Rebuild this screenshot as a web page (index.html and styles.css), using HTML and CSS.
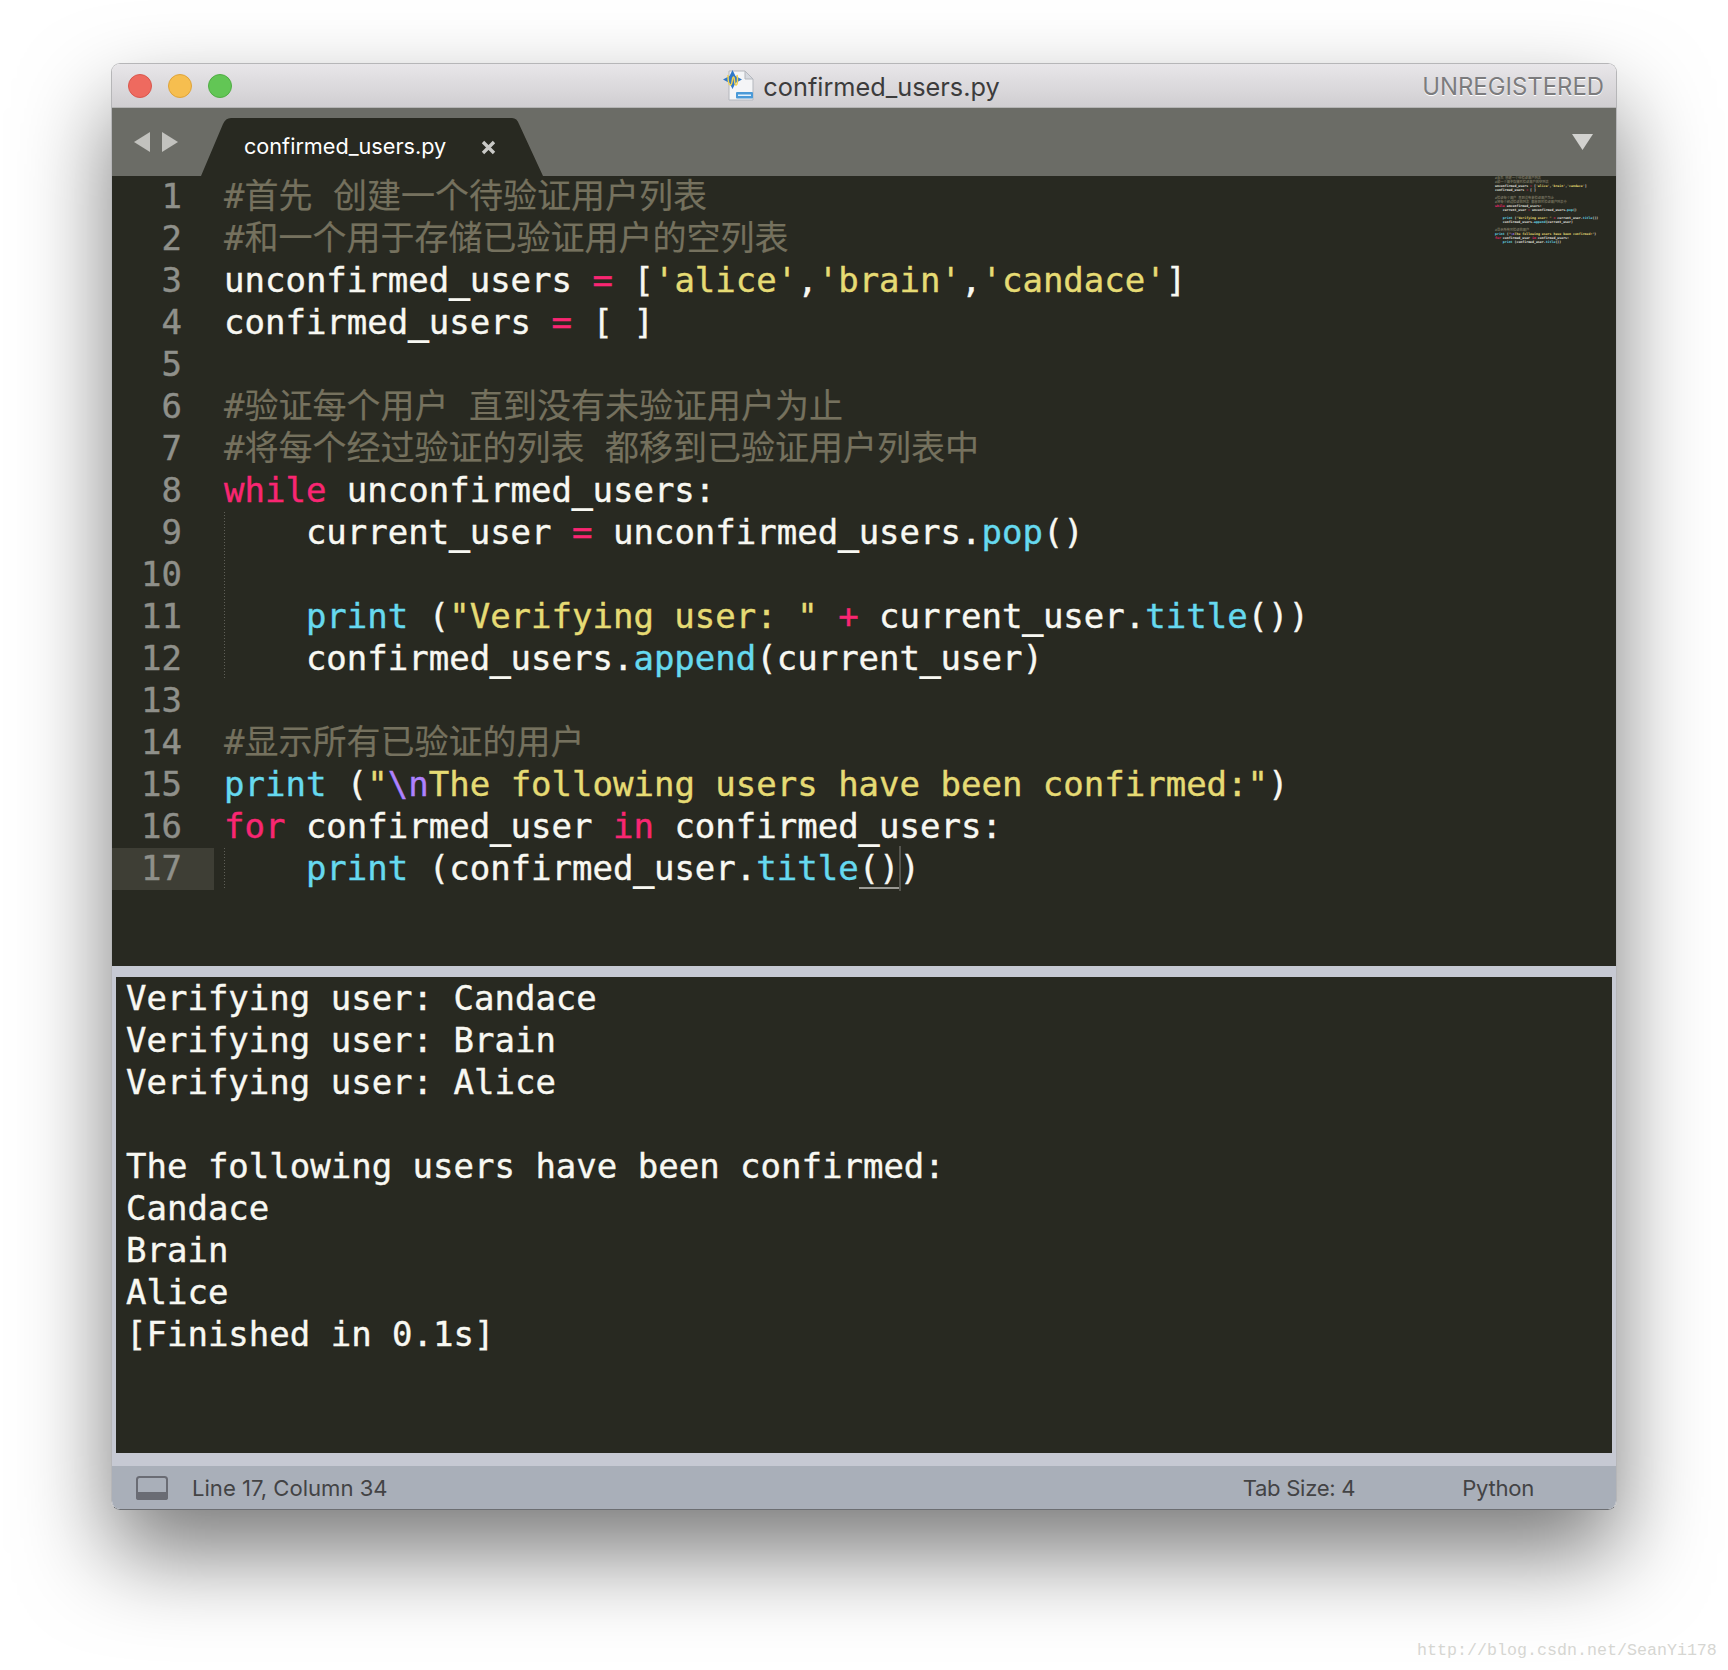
FILE: index.html
```html
<!DOCTYPE html>
<html lang="en">
<head>
<meta charset="utf-8">
<title>confirmed_users.py</title>
<link rel="stylesheet" href="styles.css">
</head>
<body>
<main class="window">
  <header class="titlebar">
    <div class="lights"><span class="light red"></span><span class="light yellow"></span><span class="light green"></span></div>
    <div class="title">
      <svg class="file-icon" width="31" height="31" viewBox="0 0 31 31">
        <path d="M6 1H22L30 9V30H6Z" fill="#f4f5f7" stroke="#b4b7bd"/>
        <path d="M22 1V9H30Z" fill="#d6d9df" stroke="#b4b7bd"/>
        <path d="M9.5 0L12.5 6L19 9.5L12.5 13L9.5 19L6.5 13L0 9.5L6.5 6Z" fill="#2f78c8"/>
        <path d="M5 5C5 12 6 15 7.5 15C9.5 15 9 7 10.5 7C12 7 11 15 13 15C14.5 15 15 9 14 5" fill="none" stroke="#f2d24e" stroke-width="1.5"/>
        <rect x="13" y="22" width="17" height="6.5" rx="1" fill="#4a9ad8"/>
        <rect x="15" y="24.5" width="13" height="1.5" fill="#e6f2fb"/>
      </svg>
      <span class="title-name">confirmed_users.py</span>
    </div>
    <div class="unreg">UNREGISTERED</div>
  </header>

  <nav class="tabbar">
    <div class="arrows">
      <svg width="16" height="20" viewBox="0 0 16 20"><path d="M16 0V20L0 10Z" fill="#c2c2be"/></svg>
      <svg width="16" height="20" viewBox="0 0 16 20"><path d="M0 0V20L16 10Z" fill="#c2c2be"/></svg>
    </div>
    <div class="tab">
      <span class="tab-name">confirmed_users.py</span>
      <svg class="tab-close" width="15" height="15" viewBox="0 0 15 15"><path d="M2 2L13 13M13 2L2 13" stroke="#c9c9c6" stroke-width="3.4"/></svg>
    </div>
    <svg class="tab-menu" width="21" height="16" viewBox="0 0 21 16"><path d="M0 0H21L10.5 16Z" fill="#d2d2cf"/></svg>
  </nav>

  <section class="editor">
    <div class="row"><span class="ln">1</span><span class="code c">#首先 创建一个待验证用户列表</span></div>
    <div class="row"><span class="ln">2</span><span class="code c">#和一个用于存储已验证用户的空列表</span></div>
    <div class="row"><span class="ln">3</span><span class="code">unconfirmed<i class="u">_</i>users <b class="k">=</b> [<b class="s">'alice'</b>,<b class="s">'brain'</b>,<b class="s">'candace'</b>]</span></div>
    <div class="row"><span class="ln">4</span><span class="code">confirmed<i class="u">_</i>users <b class="k">=</b> [ ]</span></div>
    <div class="row"><span class="ln">5</span><span class="code"></span></div>
    <div class="row"><span class="ln">6</span><span class="code c">#验证每个用户 直到没有未验证用户为止</span></div>
    <div class="row"><span class="ln">7</span><span class="code c">#将每个经过验证的列表 都移到已验证用户列表中</span></div>
    <div class="row"><span class="ln">8</span><span class="code"><b class="k">while</b> unconfirmed<i class="u">_</i>users:</span></div>
    <div class="row"><span class="ln">9</span><span class="code guide">    current<i class="u">_</i>user <b class="k">=</b> unconfirmed<i class="u">_</i>users.<b class="f">pop</b>()</span></div>
    <div class="row"><span class="ln">10</span><span class="code guide"></span></div>
    <div class="row"><span class="ln">11</span><span class="code guide">    <b class="f">print</b> (<b class="s">"Verifying user: "</b> <b class="k">+</b> current<i class="u">_</i>user.<b class="f">title</b>())</span></div>
    <div class="row"><span class="ln">12</span><span class="code guide">    confirmed<i class="u">_</i>users.<b class="f">append</b>(current<i class="u">_</i>user)</span></div>
    <div class="row"><span class="ln">13</span><span class="code"></span></div>
    <div class="row"><span class="ln">14</span><span class="code c">#显示所有已验证的用户</span></div>
    <div class="row"><span class="ln">15</span><span class="code"><b class="f">print</b> (<b class="s">"<b class="e">\n</b>The following users have been confirmed:"</b>)</span></div>
    <div class="row"><span class="ln">16</span><span class="code"><b class="k">for</b> confirmed<i class="u">_</i>user <b class="k">in</b> confirmed<i class="u">_</i>users:</span></div>
    <div class="row current"><span class="ln">17</span><span class="code guide">    <b class="f">print</b> (confirmed<i class="u">_</i>user.<b class="f">title</b><span class="match">()</span>)</span></div>

    <div class="minimap" aria-hidden="true">
      <div class="c">#首先 创建一个待验证用户列表</div>
      <div class="c">#和一个用于存储已验证用户的空列表</div>
      <div>unconfirmed_users <b class="k">=</b> [<b class="s">'alice'</b>,<b class="s">'brain'</b>,<b class="s">'candace'</b>]</div>
      <div>confirmed_users <b class="k">=</b> [ ]</div>
      <div></div>
      <div class="c">#验证每个用户 直到没有未验证用户为止</div>
      <div class="c">#将每个经过验证的列表 都移到已验证用户列表中</div>
      <div><b class="k">while</b> unconfirmed_users:</div>
      <div>    current_user <b class="k">=</b> unconfirmed_users.<b class="f">pop</b>()</div>
      <div></div>
      <div>    <b class="f">print</b> (<b class="s">"Verifying user: "</b> <b class="k">+</b> current_user.<b class="f">title</b>())</div>
      <div>    confirmed_users.<b class="f">append</b>(current_user)</div>
      <div></div>
      <div class="c">#显示所有已验证的用户</div>
      <div><b class="f">print</b> (<b class="s">"<b class="e">\n</b>The following users have been confirmed:"</b>)</div>
      <div><b class="k">for</b> confirmed_user <b class="k">in</b> confirmed_users:</div>
      <div>    <b class="f">print</b> (confirmed_user.<b class="f">title</b>())</div>
    </div>
  </section>

  <section class="panel">
    <div class="panel-body">
      <pre class="output">Verifying user: Candace
Verifying user: Brain
Verifying user: Alice

The following users have been confirmed:
Candace
Brain
Alice
[Finished in 0.1s]</pre>
    </div>
  </section>

  <footer class="status">
    <svg class="panel-icon" width="32" height="24" viewBox="0 0 32 24">
      <rect x="1" y="1" width="30" height="22" rx="2.5" fill="none" stroke="#6a6c74" stroke-width="2"/>
      <path d="M0 16H32V21.5A2.5 2.5 0 0 1 29.5 24H2.5A2.5 2.5 0 0 1 0 21.5Z" fill="#6a6c74"/>
    </svg>
    <span class="pos">Line 17, Column 34</span>
    <span class="tabsize">Tab Size: 4</span>
    <span class="syntax">Python</span>
  </footer>
</main>
<div class="watermark">http://blog.csdn.net/SeanYi178</div>
</body>
</html>
```
FILE: styles.css
```css
* { box-sizing: border-box; }
html, body { margin: 0; height: 100%; }
body {
  background: #fff;
  padding: 63px 111px 0;
  overflow: hidden;
  position: relative;
}
.window {
  width: 1506px;
  height: 1447px;
  display: flex;
  flex-direction: column;
  border: 1px solid #b6b6b8;
  border-bottom-color: #6c6e72;
  border-radius: 9px;
  overflow: hidden;
  box-shadow: 0 44px 90px rgba(0,0,0,.52);
}

/* title bar */
.titlebar {
  flex: 0 0 44px;
  display: grid;
  grid-template-columns: 1fr auto 1fr;
  align-items: center;
  padding: 0 12px 0 16px;
  background: linear-gradient(#e8e6e9, #d0ced1);
  border-bottom: 1px solid #b4b4b4;
}
.lights { display: flex; gap: 16px; }
.light { width: 24px; height: 24px; border-radius: 50%; border: 1px solid; }
.red { background: #ee6a5f; border-color: #d9574d; }
.yellow { background: #f6be4f; border-color: #dfa43a; }
.green { background: #62c655; border-color: #50ad44; }
.title {
  display: flex;
  align-items: center;
  gap: 9px;
  padding-right: 9px;
  font: 25.3px Inter, "Liberation Sans", sans-serif;
  color: #3c3c3c;
}
.title-name { padding-top: 2px; }
.unreg {
  justify-self: end;
  padding-top: 2px;
  font: 23.9px Inter, "Liberation Sans", sans-serif;
  color: #7c7c7e;
  text-shadow: 0 1px 0 #fff;
}

/* tabs */
.tabbar {
  flex: 0 0 68px;
  display: flex;
  align-items: flex-end;
  background: #6b6c66;
  position: relative;
}
.arrows {
  display: flex;
  gap: 12px;
  align-self: flex-start;
  padding: 24px 0 0 22px;
  width: 89px;
}
.tab {
  width: 342px;
  height: 58px;
  display: flex;
  align-items: center;
  padding: 0 47px 0 43px;
  justify-content: space-between;
  background: #282921;
  clip-path: path("M0 58 L22 6 Q24.5 0 30 0 L311 0 Q316 0 318 6 L342 58 Z");
}
.tab-name {
  font: 21.65px Inter, "Liberation Sans", sans-serif;
  color: #fff;
  padding-bottom: 2px;
}
.tab-menu { position: absolute; right: 23px; top: 26px; }

/* editor */
.editor {
  flex: 1;
  background: #282921;
  position: relative;
  font: 34px/40px "DejaVu Sans Mono", "Noto Sans CJK SC", monospace;
  color: #f8f8f2;
  -webkit-text-stroke: .4px;
}
.row { display: flex; height: 42px; }
.ln {
  flex: 0 0 102px;
  padding-right: 32px;
  text-align: right;
  color: #8f908a;
}
.current .ln { background: #3e3e35; }
.code {
  flex: 1;
  margin-left: 10px;
  white-space: pre;
}
.guide {
  background: repeating-linear-gradient(#5f5f57 0 1px, transparent 1px 3px) 0 0 / 1px 100% no-repeat;
}
b { font-weight: normal; }
.u { font-style: normal; -webkit-text-stroke: 1.3px; }
.c { color: #75715e; -webkit-text-stroke: .2px; }
.k { color: #f92672; }
.s { color: #e6db74; }
.f { color: #66d9ef; }
.e { color: #ae81ff; }
.match { position: relative; }
.match::before {
  content: "";
  position: absolute;
  left: 0;
  right: 0;
  bottom: -1px;
  height: 2px;
  background: #9a9a94;
}
.match::after {
  content: "";
  position: absolute;
  right: -1px;
  top: -2px;
  bottom: -3px;
  width: 2px;
  background: #55554f;
}
.minimap {
  position: absolute;
  left: 1383px;
  top: 0;
  font: bold 3.24px/4px "DejaVu Sans Mono", "Noto Sans CJK SC", monospace;
  color: #e8e8e0;
  -webkit-text-stroke: 0;
}
.minimap div { height: 4px; white-space: pre; -webkit-text-stroke: 0; }
.minimap b { font-weight: bold; }

/* output panel */
.panel {
  flex: 0 0 500px;
  padding: 12px 4px;
  background: #c6c9d3;
}
.panel-body {
  height: 100%;
  padding: 0 10px;
  background: #282921;
}
.output {
  margin: -1px 0 0;
  color: #f8f8f2;
  font: 34px/42px "DejaVu Sans Mono", monospace;
  -webkit-text-stroke: .4px;
}

/* status bar */
.status {
  flex: 0 0 43px;
  display: flex;
  align-items: center;
  padding-left: 24px;
  background: #a9afb9;
  font: 22.1px Inter, "Liberation Sans", sans-serif;
  color: #434345;
}
.pos { margin-left: 24px; }
.tabsize { margin-left: 855px; letter-spacing: -.3px; }
.syntax { margin-left: 107px; letter-spacing: -.3px; }

.watermark {
  position: absolute;
  left: 1417px;
  top: 1641px;
  font: 16.67px/20px "Liberation Mono", monospace;
  color: #d6d6d2;
}
```
